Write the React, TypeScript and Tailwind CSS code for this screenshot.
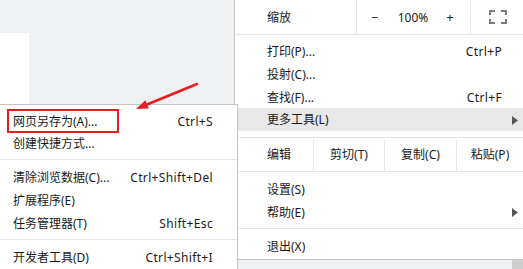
import React from 'react'

type Item = { label: string; shortcut?: string; arrow?: boolean; active?: boolean; h?: string }

const FONT = "font-['Noto_Sans','Noto_Sans_CJK_SC',sans-serif]"

function Arrow() {
    return (
        <svg width="6" height="9" viewBox="0 0 6 9" className="shrink-0">
            <path d="M0 0 L6 4.5 L0 9 Z" fill="#555" />
        </svg>
    )
}

function MainRow({ label, shortcut, arrow, active, h = 'h-[23px]' }: Item) {
    return (
        <div
            className={`flex items-center justify-between pt-[1px] pl-[32px] ${arrow ? 'pr-[5px]' : 'pr-[21px]'} ${h} ${
                active ? 'bg-[#e8e8e8]' : ''
            }`}
        >
            <span>{label}</span>
            {shortcut ? <span className="tracking-[0.35px]">{shortcut}</span> : null}
            {arrow ? <Arrow /> : null}
        </div>
    )
}

function SubRow({ label, shortcut, h = 'h-[23px]' }: Item) {
    return (
        <div className={`flex items-center justify-between pt-[1px] pl-[13px] pr-[24px] ${h}`}>
            <span>{label}</span>
            {shortcut ? <span className="tracking-[0.35px]">{shortcut}</span> : null}
        </div>
    )
}

function FullscreenIcon() {
    return (
        <svg width="18" height="14" viewBox="0 0 18 14" fill="none" stroke="#7b7b7b" strokeWidth="2">
            <path d="M1 5 V1 H6" />
            <path d="M12 1 H17 V5" />
            <path d="M17 9 V13 H12" />
            <path d="M6 13 H1 V9" />
        </svg>
    )
}

export default function App() {
    return (
        <div className={`relative flex h-[269px] w-[523px] overflow-hidden bg-[#f0f1f3] text-[12px] leading-none text-[#1a1a1a] ${FONT}`}>
            {/* page behind the menu */}
            <div className="w-[234px] shrink-0 pt-[33px]">
                <div className="h-[71px] w-[29px] bg-white" />
            </div>

            {/* main browser menu */}
            <div className="flex w-[289px] shrink-0 flex-col">
                <div className="h-[260px] border-b border-l border-[#c4c4c4] bg-white">
                    <div className="flex h-[35px] border-b border-[#e6e6e6]">
                        <div className="flex w-[122px] items-center border-r border-[#e6e6e6] pt-[2px] pl-[32px]">缩放</div>
                        <div className="grid w-[114px] grid-cols-[36px_40px_34px] items-center border-r border-[#e6e6e6] pt-[2px] text-center">
                            <span>−</span>
                            <span>100%</span>
                            <span>+</span>
                        </div>
                        <div className="flex flex-1 items-center justify-center pl-[2px]">
                            <FullscreenIcon />
                        </div>
                    </div>
                    <div className="pt-[5px]">
                        <MainRow label="打印(P)..." shortcut="Ctrl+P" />
                        <MainRow label="投射(C)..." />
                        <MainRow label="查找(F)..." shortcut="Ctrl+F" h="h-[22px]" />
                        <MainRow label="更多工具(L)" arrow active />
                    </div>
                    <div className="mt-[6px] flex h-[35px] border-y border-[#e6e6e6] pt-[1px]">
                        <div className="flex w-[79px] items-center border-r border-[#e6e6e6] pl-[32px]">编辑</div>
                        <div className="flex w-[71px] items-center justify-center border-r border-[#e6e6e6]">剪切(T)</div>
                        <div className="flex w-[72px] items-center justify-center border-r border-[#e6e6e6]">复制(C)</div>
                        <div className="flex flex-1 items-center justify-center">粘贴(P)</div>
                    </div>
                    <div className="border-b border-[#e6e6e6] pt-[6px] pb-[5px]">
                        <MainRow label="设置(S)" />
                        <MainRow label="帮助(E)" arrow h="h-[22px]" />
                    </div>
                    <div className="pt-[6px]">
                        <MainRow label="退出(X)" />
                    </div>
                </div>
                <div className="flex flex-1 justify-end">
                    <div className="w-[11px] bg-[#cdcdcd]" />
                </div>
            </div>

            {/* "more tools" submenu */}
            <div className="absolute left-0 top-[104px] h-[170px] w-[238px] border-r border-t border-[#c4c4c4] bg-white">
                <div className="border-b border-[#e6e6e6] pt-[5px] pb-[4px]">
                    <SubRow label="网页另存为(A)..." shortcut="Ctrl+S" h="h-[22px]" />
                    <SubRow label="创建快捷方式..." h="h-[23px]" />
                </div>
                <div className="border-b border-[#e6e6e6] pt-[6px] pb-[4px]">
                    <SubRow label="清除浏览数据(C)..." shortcut="Ctrl+Shift+Del" />
                    <SubRow label="扩展程序(E)" />
                    <SubRow label="任务管理器(T)" shortcut="Shift+Esc" />
                </div>
                <div className="pt-[6px]">
                    <SubRow label="开发者工具(D)" shortcut="Ctrl+Shift+I" />
                </div>
            </div>

            {/* annotation: red box + arrow */}
            <div className="absolute left-[7px] top-[109px] h-[24px] w-[112px] border-2 border-[#e61e1e]" />
            <svg className="pointer-events-none absolute left-0 top-0" width="523" height="269" viewBox="0 0 523 269">
                <line x1="197" y1="84" x2="147" y2="104.5" stroke="#e61e1e" strokeWidth="2.5" strokeLinecap="round" />
                <path d="M136 109 L148.8 108.6 L145.4 100.3 Z" fill="#e61e1e" />
            </svg>
        </div>
    )
}
